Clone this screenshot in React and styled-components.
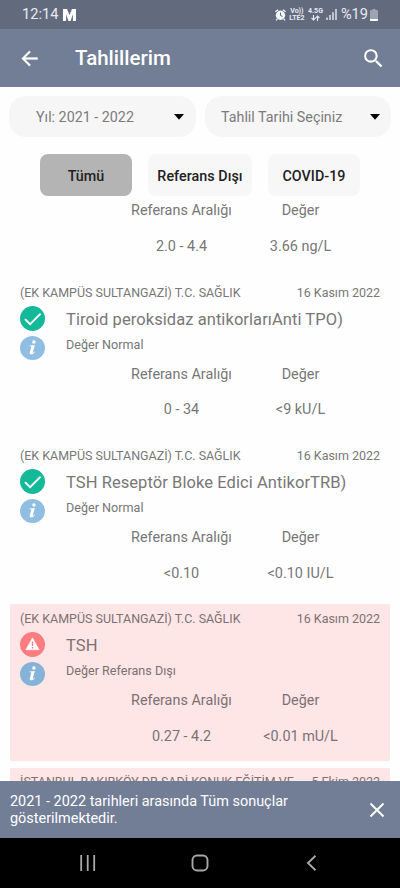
import React from 'react';
import styled, { createGlobalStyle } from 'styled-components';

const GlobalStyle = createGlobalStyle`
    * {
        box-sizing: border-box;
    }
    body {
        margin: 0;
        font-family: Roboto, 'Noto Sans', sans-serif;
        color: #777;
        background-color: #fff;
    }
    button {
        font-family: inherit;
        border: none;
        padding: 0;
        background: none;
    }
    svg {
        display: block;
        flex-shrink: 0;
    }
`;

const StyledScreen = styled.div`
    width: 400px;
    height: 888px;
    display: flex;
    flex-direction: column;
    overflow: hidden;
    background-color: #fefefe;
`;
// Top bars
const StyledStatusBar = styled.div`
    height: 29px;
    flex-shrink: 0;
    padding: 0 22px 0 22px;
    display: flex;
    justify-content: space-between;
    align-items: center;
    color: #e9ebf0;
    background-color: #626a7e;
`;
const StyledStatusGroup = styled.div`
    display: flex;
    align-items: center;
    gap: ${(props) => props.$gap};
`;
const StyledClock = styled.span`
    font-size: 14.6px;
    line-height: 20px;
    margin-top: -1px;
`;
const StyledNetwork = styled.div`
    display: flex;
    flex-direction: column;
    align-items: center;
    font-size: 7px;
    font-weight: 700;
    line-height: 6.5px;
`;
const StyledHeader = styled.header`
    height: 58px;
    flex-shrink: 0;
    padding: 0 14px 0 18px;
    display: flex;
    align-items: center;
    color: #fff;
    background-color: #727d96;
`;
const StyledTitle = styled.h1`
    flex: 1;
    margin: 0 0 0 34px;
    font-size: 20.5px;
    font-weight: 500;
    line-height: 24px;
`;
// Filters
const StyledFilters = styled.div`
    display: flex;
    gap: 9px;
    padding: 9px 9px 0;
`;
const StyledSelect = styled.button`
    width: ${(props) => props.$width};
    height: 41px;
    padding: 1px ${(props) => props.$right} 0 ${(props) => props.$left};
    display: flex;
    justify-content: space-between;
    align-items: center;
    font-size: 14.3px;
    color: #7b7b7b;
    background-color: #f6f6f6;
    border-radius: 17px;
`;
const StyledTabs = styled.div`
    display: flex;
    gap: 16px;
    padding: 17px 40px 0;
`;
const StyledTab = styled.button`
    width: ${(props) => props.$width};
    height: 42px;
    padding-top: 2px;
    font-size: 14.3px;
    font-weight: 500;
    letter-spacing: 0.04px;
    color: #212121;
    background-color: ${(props) => (props.$active ? '#b4b4b4' : '#f7f7f7')};
    border-radius: 8px;
`;
// Results
const StyledList = styled.main`
    flex: 1;
    min-height: 0;
    overflow: hidden;
    display: flex;
    flex-direction: column;
    gap: 7px;
    padding: 0 10px;
`;
const StyledCard = styled.section`
    height: ${(props) => props.$height || '156.2px'};
    flex-shrink: 0;
    padding: 0 10px;
    border-radius: 2px;
    background-color: ${(props) => (props.$alert ? '#fee6e7' : 'transparent')};
    color: ${(props) => (props.$alert ? '#7d7071' : '#777')};
`;
const StyledCardTop = styled.div`
    height: 27.5px;
    padding-top: 0.6px;
    display: flex;
    justify-content: space-between;
    align-items: center;
    font-size: 12.48px;
    white-space: nowrap;
`;
const StyledCardBody = styled.div`
    display: flex;
    gap: 21px;
`;
const StyledIcons = styled.div`
    width: 25px;
    display: flex;
    flex-direction: column;
    gap: 5px;
`;
const StyledName = styled.div`
    height: 27px;
    font-size: 16.5px;
    line-height: 27px;
    letter-spacing: 0.07px;
    white-space: nowrap;
`;
const StyledState = styled.div`
    height: 25px;
    font-size: 12.6px;
    line-height: 24.5px;
`;
const StyledValues = styled.div`
    display: grid;
    grid-template-columns: 119px 119px;
    grid-template-rows: 29px 42px;
    justify-content: start;
    align-items: center;
    padding: 0.4px 0 0 102px;
    font-size: 14.4px;
    text-align: center;
`;
// Bottom bars
const StyledSnackbar = styled.div`
    height: 57px;
    flex-shrink: 0;
    padding: 0 15px 0 10px;
    display: flex;
    justify-content: space-between;
    align-items: center;
    font-size: 14.45px;
    line-height: 17px;
    color: #fff;
    background-color: #727d96;
`;
const StyledMessage = styled.p`
    width: 290px;
    margin: 1px 0 0;
    white-space: nowrap;
`;
const StyledNavBar = styled.nav`
    height: 50px;
    flex-shrink: 0;
    padding: 0 78px;
    display: flex;
    justify-content: space-between;
    align-items: center;
    background-color: #000;
`;

const results = [
    {
        id: 1,
        place: '(EK KAMPÜS SULTANGAZİ) T.C. SAĞLIK',
        date: '16 Kasım 2022',
        name: 'Tiroid peroksidaz antikorlarıAnti TPO)',
        state: 'Değer Normal',
        range: '0 - 34',
        value: '<9 kU/L',
    },
    {
        id: 2,
        place: '(EK KAMPÜS SULTANGAZİ) T.C. SAĞLIK',
        date: '16 Kasım 2022',
        name: 'TSH Reseptör Bloke Edici AntikorTRB)',
        state: 'Değer Normal',
        range: '<0.10',
        value: '<0.10 IU/L',
    },
    {
        id: 3,
        place: '(EK KAMPÜS SULTANGAZİ) T.C. SAĞLIK',
        date: '16 Kasım 2022',
        name: 'TSH',
        state: 'Değer Referans Dışı',
        range: '0.27 - 4.2',
        value: '<0.01 mU/L',
        alert: true,
    },
];

const Caret = () => (
    <svg width="10" height="6" viewBox="0 0 10 6">
        <path d="M0 0h10L5 5.7z" fill="#000" />
    </svg>
);

const CheckIcon = () => (
    <svg width="25" height="25" viewBox="0 0 25 25">
        <circle cx="12.5" cy="12.5" r="12.5" fill="#14b99a" />
        <path d="M5 13.1l5.1 5.1L20.6 7.7" fill="none" stroke="#fff" strokeWidth="1.9" />
    </svg>
);

const AlertIcon = () => (
    <svg width="25" height="25" viewBox="0 0 25 25">
        <circle cx="12.5" cy="12.5" r="12.5" fill="#fd7c80" />
        <path d="M12.5 5.8L19.2 17.8H5.8z" fill="#fff" stroke="#fff" strokeWidth="0.5" strokeLinejoin="round" />
        <path d="M12.5 9.5v4.4M12.5 15v1.5" stroke="#fd7c80" strokeWidth="1.4" />
    </svg>
);

const InfoIcon = ({ alert }) => (
    <svg width="25" height="24" viewBox="0 0 25 24">
        <ellipse cx="12.5" cy="12" rx="12.5" ry="12" fill={alert ? '#85b2d7' : '#8fbee2'} />
        <circle cx="13.9" cy="6" r="1.7" fill="#fff" />
        <path
            d="M9.6 9.5l5.3-.6-2.1 7.3c-.2.7.3.7.8.2l.9-.9.5.4c-1.2 1.6-2.4 2.4-3.7 2.4-1.3 0-1.9-.8-1.5-2.1l1.4-5c.2-.7 0-.9-.6-.9h-1z"
            fill="#fff"
        />
    </svg>
);

function Values({ range, value }) {
    return (
        <StyledValues>
            <span>Referans Aralığı</span>
            <span>Değer</span>
            <span>{range}</span>
            <span>{value}</span>
        </StyledValues>
    );
}

function ResultCard({ result }) {
    return (
        <StyledCard $alert={result.alert}>
            <StyledCardTop>
                <span>{result.place}</span>
                <span>{result.date}</span>
            </StyledCardTop>
            <StyledCardBody>
                <StyledIcons>
                    {result.alert ? <AlertIcon /> : <CheckIcon />}
                    <InfoIcon alert={result.alert} />
                </StyledIcons>
                <div>
                    <StyledName>{result.name}</StyledName>
                    <StyledState>{result.state}</StyledState>
                </div>
            </StyledCardBody>
            <Values range={result.range} value={result.value} />
        </StyledCard>
    );
}

function StatusBar() {
    return (
        <StyledStatusBar>
            <StyledStatusGroup $gap="5px">
                <StyledClock>12:14</StyledClock>
                <svg width="13" height="12" viewBox="0 0 13 12">
                    <path d="M0 0h4l2.5 6L9 0h4v12h-3.1V5.2L7.6 12H5.4L3.1 5.2V12H0z" fill="#fff" />
                </svg>
            </StyledStatusGroup>
            <StyledStatusGroup $gap="3.5px">
                <svg width="11" height="12" viewBox="0 0 11 12">
                    <circle cx="5.5" cy="6.3" r="4.7" fill="#f3f4f6" />
                    <path d="M.4 2.8L3 .7M10.6 2.8L8 .7M2.3 9.8L1 11.4M8.7 9.8L10 11.4" stroke="#f3f4f6" strokeWidth="1.3" />
                    <path d="M5.5 3.5v3l2 .9" fill="none" stroke="#626a7e" strokeWidth="1" />
                </svg>
                <StyledNetwork>
                    <span>Vo))</span>
                    <span>LTE2</span>
                </StyledNetwork>
                <StyledNetwork>
                    <span>4.5G</span>
                    <svg width="9" height="6" viewBox="0 0 9 6">
                        <path d="M2.5 0v5M.5 3l2 2 2-2M6.5 6V1M4.7 3l1.8-2 1.9 2" fill="none" stroke="#e9ebf0" strokeWidth="1.1" />
                    </svg>
                </StyledNetwork>
                <svg width="11" height="11" viewBox="0 0 11 11">
                    <path d="M1 8.5V11M4 6V11M7 3.2V11M10 0V11" stroke="#e9ebf0" strokeWidth="1.4" />
                </svg>
                <StyledStatusGroup $gap="2px">
                    <StyledClock>%19</StyledClock>
                    <svg width="8" height="12" viewBox="0 0 8 12">
                        <path d="M2.5 0h3v1H7q1 0 1 1v9q0 1-1 1H1q-1 0-1-1V2q0-1 1-1h1.5z" fill="#9da3b0" />
                        <path d="M0 10h8v1q0 1-1 1H1q-1 0-1-1z" fill="#fff" />
                    </svg>
                </StyledStatusGroup>
            </StyledStatusGroup>
        </StyledStatusBar>
    );
}

function App() {
    return (
        <StyledScreen>
            <GlobalStyle />
            <StatusBar />
            <StyledHeader>
                <svg width="23" height="23" viewBox="0 0 24 24">
                    <path d="M20.5 11H7.5l5.7-5.7L11.8 4l-8 8 8 8 1.4-1.4L7.5 13h13z" fill="#fff" stroke="#fff" strokeWidth="0.3" />
                </svg>
                <StyledTitle>Tahlillerim</StyledTitle>
                <svg width="25" height="25" viewBox="0 0 24 24">
                    <path
                        d="M15.5 14h-.79l-.28-.27A6.47 6.47 0 0 0 16 9.5 6.5 6.5 0 1 0 9.5 16c1.61 0 3.09-.59 4.23-1.57l.27.28v.79l5 4.99L20.49 19l-4.99-5zm-6 0C7.01 14 5 11.99 5 9.5S7.01 5 9.5 5 14 7.01 14 9.5 11.99 14 9.5 14z"
                        fill="#fff"
                    />
                </svg>
            </StyledHeader>
            <StyledFilters>
                <StyledSelect $width="187px" $left="27px" $right="12px">
                    Yıl: 2021 - 2022
                    <Caret />
                </StyledSelect>
                <StyledSelect $width="186px" $left="16px" $right="11px">
                    Tahlil Tarihi Seçiniz
                    <Caret />
                </StyledSelect>
            </StyledFilters>
            <StyledTabs>
                <StyledTab $width="92px" $active>
                    Tümü
                </StyledTab>
                <StyledTab $width="104px">Referans Dışı</StyledTab>
                <StyledTab $width="92px">COVID-19</StyledTab>
            </StyledTabs>
            <StyledList>
                <StyledCard $height="75.1px">
                    <Values range="2.0 - 4.4" value="3.66 ng/L" />
                </StyledCard>
                {results.map((result) => (
                    <ResultCard key={result.id} result={result} />
                ))}
                <StyledCard $alert>
                    <StyledCardTop>
                        <span>İSTANBUL BAKIRKÖY DR.SADİ KONUK EĞİTİM VE</span>
                        <span>5 Ekim 2022</span>
                    </StyledCardTop>
                </StyledCard>
            </StyledList>
            <StyledSnackbar>
                <StyledMessage>
                    2021 - 2022 tarihleri arasında Tüm sonuçlar
                    <br />
                    gösterilmektedir.
                </StyledMessage>
                <svg width="16" height="16" viewBox="0 0 16 16">
                    <path d="M1.5 1.5l13 13M14.5 1.5l-13 13" stroke="#fff" strokeWidth="1.9" />
                </svg>
            </StyledSnackbar>
            <StyledNavBar>
                <svg width="18" height="16" viewBox="0 0 18 16">
                    <path d="M3.2 0v16M9.7 0v16M16.2 0v16" stroke="#a8a8a8" strokeWidth="1.8" />
                </svg>
                <svg width="18" height="18" viewBox="0 0 18 18">
                    <rect x="1.5" y="1.5" width="15" height="15" rx="4.5" fill="none" stroke="#a8a8a8" strokeWidth="1.9" />
                </svg>
                <svg width="18" height="16" viewBox="0 0 18 16">
                    <path d="M11.5 .7L4 8l7.5 7.3" fill="none" stroke="#a8a8a8" strokeWidth="1.9" />
                </svg>
            </StyledNavBar>
        </StyledScreen>
    );
}

export default App;
